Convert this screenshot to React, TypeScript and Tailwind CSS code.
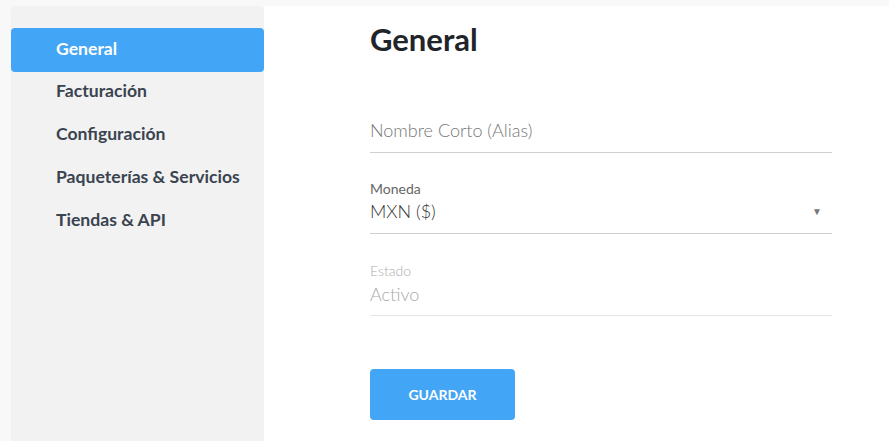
import React from "react";

const items = ["General", "Facturación", "Configuración", "Paqueterías & Servicios", "Tiendas & API"];

export default function App() {
  return (
    <div className="w-[889px] h-[441px] overflow-hidden bg-[#f8f8f8] pt-[6px] pl-[11px] flex" style={{ fontFamily: "Lato, 'Open Sans', sans-serif" }}>
      <aside className="w-[253px] shrink-0 bg-[#f2f2f2] rounded-t-[4px] pt-[22px] flex flex-col">
        {items.map((it, i) => (
          <div
            key={it}
            className={
              "flex items-center pl-[45px] text-[17.6px] font-bold rounded-[4px] " +
              (i === 0 ? "bg-[#42a5f5] text-white h-[44px] pb-[2px]" : "text-[#3a4450] h-[43px] pb-[4px]")
            }
          >
            {it}
          </div>
        ))}
      </aside>
      <main className="flex-1 bg-white pl-[106px] pr-[57px]">
        <h1 className="text-[31px] font-bold text-[#212529] leading-none mt-[18px]">General</h1>
        <div className="mt-[63px] border-b border-[#cfcfcf] pb-[10px]">
          <div className="text-[18px] font-light text-[#777] leading-[24px]">Nombre Corto (Alias)</div>
        </div>
        <div className="mt-[27px] border-b border-[#cfcfcf] pb-[10px]">
          <div className="text-[14px] text-[#666] leading-[18px]">Moneda</div>
          <div className="flex items-center justify-between text-[18px] font-light text-[#333] leading-[24px] mt-[1px]">
            <span>MXN ($)</span>
            <span className="text-[10px] text-[#777] mr-[10px]">▼</span>
          </div>
        </div>
        <div className="mt-[28px] border-b border-[#e6e6e6] pb-[9px]">
          <div className="text-[14px] font-light text-[#aaa] leading-[18px]">Estado</div>
          <div className="text-[18px] font-light text-[#aaa] leading-[24px] mt-[2px]">Activo</div>
        </div>
        <button className="mt-[53px] w-[145px] h-[51px] bg-[#42a5f5] rounded-[4px] text-white font-bold text-[14px]">
          GUARDAR
        </button>
      </main>
    </div>
  );
}
